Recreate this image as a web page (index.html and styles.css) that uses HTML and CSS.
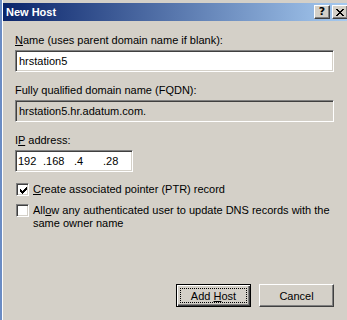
FILE: index.html
```html
<!DOCTYPE html>
<html lang="en">

<head>
    <meta charset="UTF-8">
    <meta name="viewport" content="width=device-width, initial-scale=1.0">
    <title>New Host</title>
    <link rel="stylesheet" href="styles.css">
</head>

<body>
    <div class="dialog">
        <div class="titlebar">
            <span class="title">New Host</span>
            <div class="caption-buttons">
                <span class="cap-btn help">?</span>
                <span class="cap-btn close">
                    <svg width="8" height="7" viewBox="0 0 8 7" shape-rendering="crispEdges">
                        <path d="M0 0h2v1H0zM6 0h2v1H6zM1 1h2v1H1zM5 1h2v1H5zM2 2h4v1H2zM3 3h2v1H3zM2 4h4v1H2zM1 5h2v1H1zM5 5h2v1H5zM0 6h2v1H0zM6 6h2v1H6z" fill="#000"/>
                    </svg>
                </span>
            </div>
        </div>

        <div class="content">
            <div class="field-label label-name"><u>N</u>ame (uses parent domain name if blank):</div>
            <div class="edit">hrstation5</div>

            <div class="field-label label-fqdn">Fully qualified domain name (FQDN):</div>
            <div class="edit readonly">hrstation5.hr.adatum.com.</div>

            <div class="field-label label-ip">I<u>P</u> address:</div>
            <div class="edit ip-box">
                <span class="octet">192</span>
                <span class="octet">.168</span>
                <span class="octet">.4</span>
                <span class="octet">.28</span>
            </div>

            <div class="check-row first">
                <span class="checkbox">
                    <svg width="7" height="7" viewBox="0 0 7 7" shape-rendering="crispEdges">
                        <path d="M0 2h1v3H0zM1 3h1v3H1zM2 4h1v3H2zM3 3h1v3H3zM4 2h1v3H4zM5 1h1v3H5zM6 0h1v3H6z" fill="#000"/>
                    </svg>
                </span>
                <span class="check-text"><u>C</u>reate associated pointer (PTR) record</span>
            </div>

            <div class="check-row">
                <span class="checkbox"></span>
                <span class="check-text">All<u>o</u>w any authenticated user to update DNS records with the same owner name</span>
            </div>

            <div class="button-row">
                <div class="push-btn default"><span class="focus"><span>Add <u>H</u>ost</span></span></div>
                <div class="push-btn"><span>Cancel</span></div>
            </div>
        </div>
    </div>
</body>

</html>
```

FILE: styles.css
```css
body {
    margin: 0;
    background-color: #d4d0c8;
}

.dialog {
    width: 347px;
    height: 320px;
    overflow: hidden;
    box-sizing: border-box;
    border-left: 2px solid #6b8cc4;
    padding-left: 1px;
    padding-top: 3px;
    box-shadow: inset 1px 0 #ffffff;
    background-color: #d4d0c8;
    font-family: "Liberation Sans", Arial, sans-serif;
    font-size: 11px;
    color: #000;
}

.titlebar {
    height: 18px;
    display: flex;
    align-items: center;
    justify-content: space-between;
    padding-left: 3px;
    background: linear-gradient(to right, #0a246a, #a6caf0);
}

.title {
    color: #fff;
    font-weight: bold;
    font-size: 11px;
}

.caption-buttons {
    display: flex;
    gap: 2px;
    margin-right: -1px;
}

.cap-btn {
    width: 14px;
    height: 12px;
    display: flex;
    align-items: center;
    justify-content: center;
    background-color: #d4d0c8;
    border: 1px solid;
    border-color: #ffffff #404040 #404040 #ffffff;
    box-shadow: inset -1px -1px #808080;
}

.help {
    font-weight: bold;
    font-size: 11px;
    font-family: "DejaVu Sans", sans-serif;
    line-height: 12px;
}

.content {
    display: flex;
    flex-direction: column;
    padding: 13px 0 0 12px;
}

.field-label {
    line-height: 13px;
    height: 13px;
}

.edit {
    width: 319px;
    height: 22px;
    box-sizing: border-box;
    margin-top: 3px;
    padding: 3px 0 0 3px;
    line-height: 14px;
    background-color: #fff;
    border: 1px solid;
    border-color: #808080 #ffffff #ffffff #808080;
    box-shadow: inset 1px 1px #404040, inset -1px -1px #d4d0c8;
}

.readonly {
    background-color: #d4d0c8;
}

.label-fqdn {
    margin-top: 12px;
}

.label-ip {
    margin-top: 12px;
}

.ip-box {
    width: 118px;
    display: flex;
    padding-left: 2px;
}

.octet:nth-child(1) {
    width: 25px;
}

.octet:nth-child(2) {
    width: 31px;
}

.octet:nth-child(3) {
    width: 29px;
}

.check-row {
    display: flex;
    align-items: flex-start;
    margin-top: 8px;
}

.check-row.first {
    margin-top: 11px;
}

.checkbox {
    flex: none;
    width: 13px;
    height: 13px;
    box-sizing: border-box;
    margin-left: 1px;
    padding: 2px 0 0 2px;
    background-color: #fff;
    border: 1px solid;
    border-color: #808080 #ffffff #ffffff #808080;
    box-shadow: inset 1px 1px #404040, inset -1px -1px #d4d0c8;
}

.checkbox svg {
    display: block;
    margin: 1px 0 0 1px;
}

.check-text {
    margin-left: 4px;
    width: 298px;
    line-height: 13px;
}

.button-row {
    display: flex;
    justify-content: flex-end;
    gap: 8px;
    margin-top: 54px;
    width: 319px;
}

.push-btn {
    width: 75px;
    height: 23px;
    box-sizing: border-box;
    display: flex;
    align-items: center;
    justify-content: center;
    border: 1px solid;
    border-color: #ffffff #404040 #404040 #ffffff;
    box-shadow: inset -1px -1px #808080;
}

.push-btn.default {
    border: 1px solid #000;
    box-shadow: inset 1px 1px #fff, inset -1px -1px #404040, inset -2px -2px #808080;
    padding: 3px;
}

.focus {
    flex: 1;
    align-self: stretch;
    display: flex;
    align-items: center;
    justify-content: center;
    border: 1px dotted #000;
}
```
